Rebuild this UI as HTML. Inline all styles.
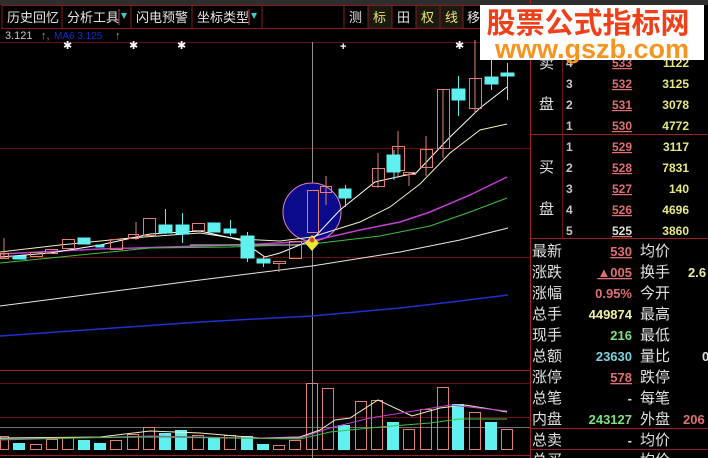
<!DOCTYPE html>
<html><head><meta charset="utf-8"><style>
html,body{margin:0;padding:0;background:#000;width:708px;height:458px;overflow:hidden}
svg{display:block}
text{font-family:"Liberation Sans","Noto Sans CJK SC",sans-serif}
</style></head><body>
<svg width="708" height="458" viewBox="0 0 708 458" xmlns="http://www.w3.org/2000/svg">
<rect width="708" height="458" fill="#000"/>
<rect x="0" y="0" width="708" height="5" fill="#2e2e2e"/>
<g stroke="#8a1a1a" fill="#000">
<rect x="2" y="5.5" width="60" height="23"/><rect x="62" y="5.5" width="69" height="23"/>
<rect x="131" y="5.5" width="61" height="23"/><rect x="192" y="5.5" width="70" height="23"/>
<rect x="262" y="5.5" width="82" height="23"/>
<rect x="344" y="5.5" width="24" height="23"/><rect x="368" y="5.5" width="24" height="23" fill="#1a1a10"/>
<rect x="392" y="5.5" width="24" height="23"/><rect x="416" y="5.5" width="24" height="23" fill="#1a1a10"/>
<rect x="440" y="5.5" width="23" height="23" fill="#1a1a10"/><rect x="463" y="5.5" width="20" height="23"/>
</g>
<g font-size="13" fill="#e6e6e6">
<text x="7" y="22">历史回忆</text><text x="67" y="22">分析工具</text>
<text x="136" y="22">闪电预警</text><text x="197" y="22">坐标类型</text>
<text x="349" y="22">测</text><text x="373" y="22" fill="#f0e070">标</text>
<text x="397" y="22">田</text><text x="421" y="22" fill="#f0e070">权</text>
<text x="445" y="22" fill="#f0e070">线</text><text x="467" y="22">移</text>
</g>
<path d="M121 13h6l-3 6z M251 13h6l-3 6z" fill="#40c8c8"/>
<line x1="119" y1="9" x2="119" y2="25" stroke="#c04040"/><line x1="249" y1="9" x2="249" y2="25" stroke="#c04040"/>
<text x="5" y="39" font-size="11" fill="#c8c8c8" font-family="Liberation Mono">3.121</text>
<text x="41" y="39" font-size="11" fill="#d08080">↑,</text>
<text x="54" y="39" font-size="10" fill="#1a2ad0">MA6  3.125</text>
<text x="115" y="39" font-size="11" fill="#d08080">↑</text>
<g stroke="#6a1010">
<line x1="0" y1="42.5" x2="530" y2="42.5"/><line x1="0" y1="148.5" x2="530" y2="148.5"/>
<line x1="0" y1="257.5" x2="530" y2="257.5"/>
<line x1="0" y1="370.5" x2="530" y2="370.5" stroke="#a02020"/>
<line x1="0" y1="383.5" x2="530" y2="383.5"/><line x1="0" y1="417.5" x2="530" y2="417.5"/>
<line x1="0" y1="455.5" x2="530" y2="455.5" stroke="#a02020"/>
</g>
<line x1="0" y1="427.5" x2="530" y2="427.5" stroke="#707070"/>
<line x1="312.5" y1="42" x2="312.5" y2="458" stroke="#909090"/>
<line x1="530.5" y1="0" x2="530.5" y2="458" stroke="#a02020"/>
<g fill="#fff" font-size="11" font-family="DejaVu Sans"><text x="63" y="49">✱</text><text x="129" y="49">✱</text><text x="177" y="49">✱</text><text x="455" y="49">✱</text><text x="340" y="50" font-weight="bold">+</text></g>
<polyline points="0,306 100,293 200,280 312,266 400,252 460,240 508,228" fill="none" stroke="#e8e8e0"/>
<polyline points="0,336 100,329 200,322 312,316 400,308 460,301 508,295" fill="none" stroke="#2030d0" stroke-width="1.5"/>
<circle cx="312" cy="212" r="29" fill="#0a0a8a" stroke="#e080c0"/>
<polyline points="0,252 60,245 130,238 200,233 240,239 280,241 312,237 360,222 390,207 420,184 450,153 480,130 507,124" fill="none" stroke="#f0f0c0"/>
<polyline points="0,254 100,249 200,246 260,244 312,241 360,230 400,222 430,212 470,195 507,177" fill="none" stroke="#c040d0" stroke-width="1.5"/>
<polyline points="0,263 80,255 150,248 230,247 312,244 380,236 430,226 470,212 507,198" fill="none" stroke="#40c040"/>
<line x1="190" y1="245" x2="300" y2="245" stroke="#909090" stroke-width="1.5"/>
<polyline points="0,257 50,253 100,245 150,234 200,231 240,240 265,257 280,253 312,240 340,210 375,182 397,177 416,173 450,137 480,108 507,87" fill="none" stroke="#fff"/>
<g stroke="#e08070" fill="none">
<path d="M4 238v20M136 222v18M326 176v29M378 153v35M398 131v47M409 172v14M426 136v40M443 89v69M475 40v73"/>
<rect x="0.5" y="253.5" width="8" height="5"/><rect x="30.5" y="252.5" width="12" height="4"/><rect x="45.5" y="249.5" width="12" height="4"/>
<rect x="62.5" y="239.5" width="12" height="9"/><rect x="110.5" y="239.5" width="12" height="10"/><rect x="128.5" y="234.5" width="10" height="4"/>
<rect x="143.5" y="218.5" width="12" height="17"/><rect x="192.5" y="223.5" width="12" height="7"/><rect x="273.5" y="261.5" width="12" height="2"/><path d="M279 263v9"/>
<rect x="289.5" y="241.5" width="12" height="17"/><rect x="307.5" y="190.5" width="11" height="42"/>
<rect x="320.5" y="186.5" width="11" height="6"/><rect x="372.5" y="168.5" width="12" height="18"/><rect x="392.5" y="146.5" width="12" height="24"/>
<rect x="403.5" y="172.5" width="12" height="2"/><rect x="420.5" y="149.5" width="12" height="18"/><rect x="437.5" y="89.5" width="12" height="59"/><rect x="469.5" y="78.5" width="12" height="30"/>
</g>
<g stroke="#60f0f0" fill="#60f0f0">
<path d="M165.5 209v25M182.5 213v30M230.5 220v16M247.5 232v30M263.5 256v11M345.5 185v22M394 150v30M458.5 76v40M491.5 60v30M507.5 63v37" fill="none"/>
<rect x="13" y="256" width="13" height="3"/><rect x="78" y="238" width="12" height="6"/><rect x="96" y="245" width="8" height="2"/>
<rect x="159" y="225" width="13" height="8"/><rect x="176" y="225" width="13" height="9"/><rect x="208" y="223" width="12" height="9"/>
<rect x="224" y="229" width="12" height="4"/><rect x="241" y="236" width="13" height="22"/><rect x="257" y="259" width="13" height="4"/>
<rect x="339" y="189" width="12" height="9"/><rect x="387" y="155" width="13" height="17"/><rect x="452" y="89" width="13" height="11"/>
<rect x="485" y="77" width="13" height="7"/><rect x="501" y="73" width="13" height="3"/>
</g>
<path d="M312 235l7 8-7 8-7-8z" fill="#e8e830"/><circle cx="312" cy="240" r="2.5" fill="#e04040"/>
<g stroke="#e08070" fill="none">
<rect x="0.5" y="436.5" width="8" height="13"/><rect x="30.5" y="444.5" width="11" height="5"/><rect x="46.5" y="439.5" width="11" height="10"/>
<rect x="62.5" y="437.5" width="11" height="12"/><rect x="110.5" y="440.5" width="11" height="9"/><rect x="127.5" y="434.5" width="11" height="15"/>
<rect x="143.5" y="427.5" width="11" height="22"/><rect x="192.5" y="435.5" width="11" height="14"/><rect x="224.5" y="435.5" width="11" height="14"/>
<rect x="273.5" y="445.5" width="11" height="4"/><rect x="289.5" y="440.5" width="11" height="9"/><rect x="306.5" y="383.5" width="11" height="66"/>
<rect x="322.5" y="388.5" width="11" height="61"/><rect x="355.5" y="401.5" width="11" height="48"/><rect x="371.5" y="400.5" width="11" height="49"/>
<rect x="403.5" y="429.5" width="11" height="20"/><rect x="420.5" y="409.5" width="11" height="40"/><rect x="437.5" y="387.5" width="11" height="62"/>
<rect x="469.5" y="412.5" width="11" height="37"/><rect x="501.5" y="429.5" width="11" height="20"/>
</g>
<g fill="#60f0f0">
<rect x="13" y="443" width="12" height="7"/><rect x="78" y="440" width="12" height="10"/><rect x="94" y="443" width="12" height="7"/>
<rect x="159" y="433" width="12" height="17"/><rect x="175" y="430" width="12" height="20"/><rect x="208" y="438" width="12" height="12"/>
<rect x="241" y="436" width="12" height="14"/><rect x="257" y="444" width="12" height="6"/><rect x="338" y="425" width="12" height="25"/>
<rect x="387" y="422" width="12" height="28"/><rect x="452" y="404" width="12" height="46"/><rect x="485" y="422" width="12" height="28"/>
</g>
<polyline points="0,438 100,437 150,431 200,433 260,438 300,437 320,430 335,420 350,418 378,400 412,416 440,408 465,405 490,409 507,412" fill="none" stroke="#f0f0c0"/>
<polyline points="0,440 150,436 250,438 300,438 330,428 370,418 420,410 450,405 507,411" fill="none" stroke="#c040d0"/>
<polyline points="0,439 150,437 300,439 330,432 380,427 430,423 460,419 507,419" fill="none" stroke="#40c040"/>
<line x1="562.5" y1="40" x2="562.5" y2="238" stroke="#6a1010"/>
<line x1="530" y1="134.5" x2="708" y2="134.5" stroke="#a02020"/>
<line x1="530" y1="238.5" x2="708" y2="238.5" stroke="#a02020"/>
<line x1="530" y1="428.5" x2="708" y2="428.5" stroke="#a02020"/>
<line x1="530" y1="449.5" x2="708" y2="449.5" stroke="#a02020"/>
<g font-size="15" fill="#e0e0e0"><text x="539" y="68">卖</text><text x="539" y="109">盘</text><text x="539" y="172">买</text><text x="539" y="214">盘</text></g>
<g font-size="12" font-weight="bold" fill="#c8c8c8">
<text x="566" y="67">4</text>
<text x="566" y="88">3</text><text x="566" y="109">2</text><text x="566" y="130">1</text>
<text x="566" y="151">1</text><text x="566" y="172">2</text><text x="566" y="193">3</text><text x="566" y="214">4</text><text x="566" y="235">5</text>
</g>
<g font-size="12" font-weight="bold" fill="#e07070" text-anchor="end" text-decoration="underline">
<text x="632" y="67">533</text>
<text x="632" y="88">532</text><text x="632" y="109">531</text><text x="632" y="130">530</text>
<text x="632" y="151">529</text><text x="632" y="172">528</text><text x="632" y="193">527</text><text x="632" y="214">526</text>
<text x="632" y="235" fill="#e0e0e0">525</text>
</g>
<g font-size="12" font-weight="bold" fill="#e8e880" text-anchor="end">
<text x="689" y="67">1122</text>
<text x="689" y="88">3125</text><text x="689" y="109">3078</text><text x="689" y="130">4772</text>
<text x="689" y="151">3117</text><text x="689" y="172">7831</text><text x="689" y="193">140</text><text x="689" y="214">4696</text><text x="689" y="235">3860</text>
</g>
<g font-size="15" fill="#e0e0e0">
<text x="532" y="256">最新</text><text x="532" y="277">涨跌</text><text x="532" y="298">涨幅</text><text x="532" y="319">总手</text>
<text x="532" y="340">现手</text><text x="532" y="361">总额</text><text x="532" y="382">涨停</text><text x="532" y="403">总笔</text>
<text x="532" y="424">内盘</text><text x="532" y="445">总卖</text><text x="532" y="465">总买</text>
<text x="640" y="256">均价</text><text x="640" y="277">换手</text><text x="640" y="298">今开</text><text x="640" y="319">最高</text>
<text x="640" y="340">最低</text><text x="640" y="361">量比</text><text x="640" y="382">跌停</text><text x="640" y="403">每笔</text>
<text x="640" y="424">外盘</text><text x="640" y="445">均价</text><text x="640" y="465">均价</text>
</g>
<g font-size="13" font-weight="bold" text-anchor="end">
<text x="632" y="256" fill="#e07070" text-decoration="underline">530</text>
<text x="632" y="277" fill="#e07070" text-decoration="underline">▲005</text>
<text x="632" y="298" fill="#e07070">0.95%</text>
<text x="632" y="319" fill="#f0f0a0">449874</text>
<text x="632" y="340" fill="#80e080">216</text>
<text x="632" y="361" fill="#80d0e0">23630</text>
<text x="632" y="382" fill="#e07070" text-decoration="underline">578</text>
<text x="632" y="403" fill="#e0e0e0">-</text>
<text x="632" y="424" fill="#80e080">243127</text>
<text x="632" y="445" fill="#e0e0e0">-</text>
</g>
<g font-size="13" font-weight="bold">
<text x="688" y="277" fill="#f0f0a0">2.6</text><text x="702" y="361" fill="#e0e0e0">0</text><text x="683" y="424" fill="#e07070">206</text>
</g>
<rect x="480" y="5" width="224" height="55" fill="#fff"/>
<text x="588" y="33" font-size="29" font-weight="bold" fill="#f0401a" text-anchor="middle" font-family="Liberation Sans,Noto Sans CJK SC,sans-serif">股票公式指标网</text>
<text x="592" y="58" font-size="27" font-weight="bold" fill="#f7941d" text-anchor="middle">www.gszb.com</text>
</svg>
</body></html>
